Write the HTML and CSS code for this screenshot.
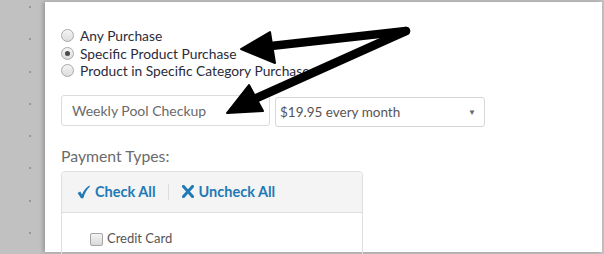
FILE: index.html
```html
<!DOCTYPE html>
<html>
<head>
<meta charset="utf-8">
<link rel="stylesheet" href="styles.css">
</head>
<body>
<div class="frame">
  <div class="rail">
    <span class="dot"></span><span class="dot"></span><span class="dot"></span><span class="dot"></span>
    <span class="dot"></span><span class="dot"></span><span class="dot"></span><span class="dot"></span>
  </div>
  <div class="sheet">
    <div class="radios">
      <div class="radio-row"><span class="radio"></span><span class="label">Any Purchase</span></div>
      <div class="radio-row"><span class="radio checked"></span><span class="label">Specific Product Purchase</span></div>
      <div class="radio-row"><span class="radio"></span><span class="label">Product in Specific Category Purchase</span></div>
    </div>
    <div class="fields">
      <div class="input">Weekly Pool Checkup</div>
      <div class="select"><span>$19.95 every month</span><span class="caret">&#9660;</span></div>
    </div>
    <div class="pt-label">Payment Types:</div>
    <div class="panel">
      <div class="panel-head">
        <span class="action"><svg class="ico" width="13" height="14" viewBox="0 0 13 14"><path d="M0.6 8 L3.2 6.4 L5 9.6 C6.6 5.6 9 2.6 12.4 0.6 L12.9 1.7 C9.9 4.2 7.8 7.8 6.3 13.2 L4 13.2 Z" fill="#1f7ab5"/></svg>Check All</span>
        <span class="sep"></span>
        <span class="action"><svg class="ico" width="12" height="13" viewBox="0 0 12 13"><path d="M1.5 1.5 L10.5 11.5 M10.5 1.5 L1.5 11.5" stroke="#1f7ab5" stroke-width="3" stroke-linecap="square"/></svg>Uncheck All</span>
      </div>
      <div class="panel-body">
        <div class="check-row"><span class="checkbox"></span><span class="cb-label">Credit Card</span></div>
      </div>
    </div>
    <svg class="arrows" width="604" height="254" viewBox="0 0 604 254">
      <g fill="#000" stroke="#000" stroke-linejoin="round" stroke-linecap="round">
        <path d="M406 31 L262 47" stroke-width="8.5" fill="none"/>
        <path d="M406 31 L250 101" stroke-width="8.5" fill="none"/>
        <path d="M241 49 L270 32 L275 63 Z" stroke-width="2"/>
        <path d="M227 113 L249 85 L263 111 Z" stroke-width="2"/>
      </g>
    </svg>
  </div>
</div>
</body>
</html>
```
FILE: styles.css
```css
html, body {
  margin: 0;
  padding: 0;
}
body {
  width: 604px;
  height: 254px;
  background: #c1c1c1;
  font-family: Lato, "Open Sans", sans-serif;
  overflow: hidden;
}
.frame {
  display: flex;
  height: 254px;
}
.rail {
  width: 45px;
  flex: none;
  display: flex;
  flex-direction: column;
  align-items: flex-end;
  padding-top: 6px;
  padding-right: 14px;
  box-sizing: border-box;
  gap: 30.3px;
}
.dot {
  width: 2px;
  height: 2px;
  background: #989898;
  display: block;
}
.sheet {
  flex: 1;
  background: #fff;
  margin: 2px 2px 2px 0;
  box-shadow: -2px 0 4px rgba(0, 0, 0, 0.22);
  padding: 25px 0 0 16px;
  position: relative;
}
.radios {
  display: flex;
  flex-direction: column;
}
.radio-row {
  display: flex;
  align-items: center;
  height: 17.5px;
}
.radio {
  width: 11px;
  height: 11px;
  border-radius: 50%;
  border: 1px solid #a9a9a9;
  background: linear-gradient(#f4f4f4, #dcdcdc);
  box-sizing: content-box;
  margin-right: 6px;
  position: relative;
}
.radio.checked::after {
  content: "";
  position: absolute;
  left: 3px;
  top: 3px;
  width: 5px;
  height: 5px;
  border-radius: 50%;
  background: #4a4a4a;
}
.label {
  font-size: 13.8px;
  color: #2b2b3a;
}
.fields {
  display: flex;
  gap: 5px;
  margin-top: 15px;
  align-items: flex-start;
}
.input {
  width: 209px;
  height: 31px;
  box-sizing: border-box;
  border: 1px solid #dcdcdc;
  border-radius: 3px;
  padding-left: 10px;
  font-size: 14px;
  color: #6a6a6a;
  display: flex;
  align-items: center;
}
.select {
  margin-top: 2px;
  width: 210px;
  height: 30px;
  box-sizing: border-box;
  border: 1px solid #d6d6d6;
  border-radius: 3px;
  padding: 0 8px 0 4px;
  font-size: 13.5px;
  color: #555;
  display: flex;
  align-items: center;
  justify-content: space-between;
}
.caret {
  font-size: 8px;
  color: #666;
}
.pt-label {
  margin-top: 19px;
  font-size: 15.8px;
  color: #6b6b6b;
  height: 20px;
}
.panel {
  margin-top: 5px;
  width: 302px;
  height: 90px;
  box-sizing: border-box;
  border: 1px solid #dedede;
  border-radius: 4px 4px 0 0;
}
.panel-head {
  height: 40px;
  background: #f4f4f4;
  border-bottom: 1px solid #dedede;
  border-radius: 4px 4px 0 0;
  display: flex;
  align-items: center;
  padding-left: 15px;
}
.action {
  display: flex;
  align-items: center;
  font-weight: bold;
  font-size: 14.5px;
  color: #1f7ab5;
}
.ico {
  margin-right: 5px;
}
.sep {
  width: 1px;
  height: 16px;
  background: #dcdcdc;
  margin: 0 13px 0 12px;
}
.panel-body {
  padding: 17px 0 0 28px;
}
.check-row {
  display: flex;
  align-items: center;
}
.checkbox {
  width: 11px;
  height: 11px;
  border: 1px solid #a5a5a5;
  border-radius: 2px;
  background: linear-gradient(#f3f3f3, #dadada);
  margin-right: 4px;
  margin-top: 3px;
}
.cb-label {
  font-size: 13px;
  color: #555;
}
.arrows {
  position: absolute;
  left: -45px;
  top: -2px;
  pointer-events: none;
}
```
